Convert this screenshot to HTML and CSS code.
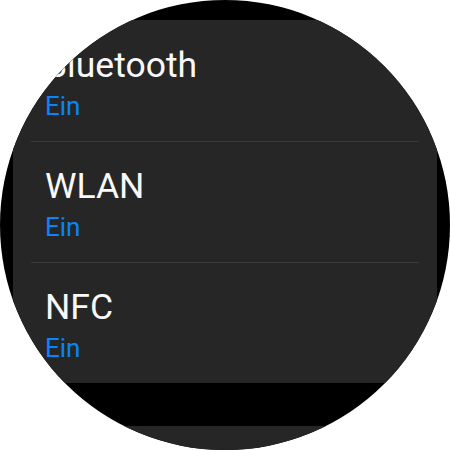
FILE: index.html
```html
<!DOCTYPE html>
<html lang="de">
<head>
<meta charset="utf-8">
<link rel="stylesheet" href="styles.css">
</head>
<body>
<div class="watch">
  <div class="screen">
    <div class="card">
      <div class="row">
        <div class="title">Bluetooth</div>
        <div class="sub">Ein</div>
      </div>
      <div class="row">
        <div class="title">WLAN</div>
        <div class="sub">Ein</div>
      </div>
      <div class="row">
        <div class="title">NFC</div>
        <div class="sub">Ein</div>
      </div>
    </div>
    <div class="card next"></div>
  </div>
</div>
</body>
</html>
```

FILE: styles.css
```css
html, body {
  margin: 0;
  padding: 0;
  background: #ffffff;
}
.watch {
  width: 450px;
  height: 450px;
  border-radius: 50%;
  overflow: hidden;
  background: #000000;
}
.screen {
  padding: 20px 13px 0;
  display: flex;
  flex-direction: column;
  gap: 43px;
}
.card {
  background: #262626;
  padding: 1px 18px 0;
  font-family: Roboto, "Noto Sans", sans-serif;
}
.row {
  padding: 22px 14px 19px;
}
.row + .row {
  border-top: 1px solid #3a3a3a;
}
.title {
  font-size: 35.5px;
  line-height: 44px;
  color: #f8f8f8;
}
.sub {
  margin-top: 3px;
  font-size: 26px;
  line-height: 32px;
  color: #0a84f8;
}
.card.next {
  height: 60px;
}
```
